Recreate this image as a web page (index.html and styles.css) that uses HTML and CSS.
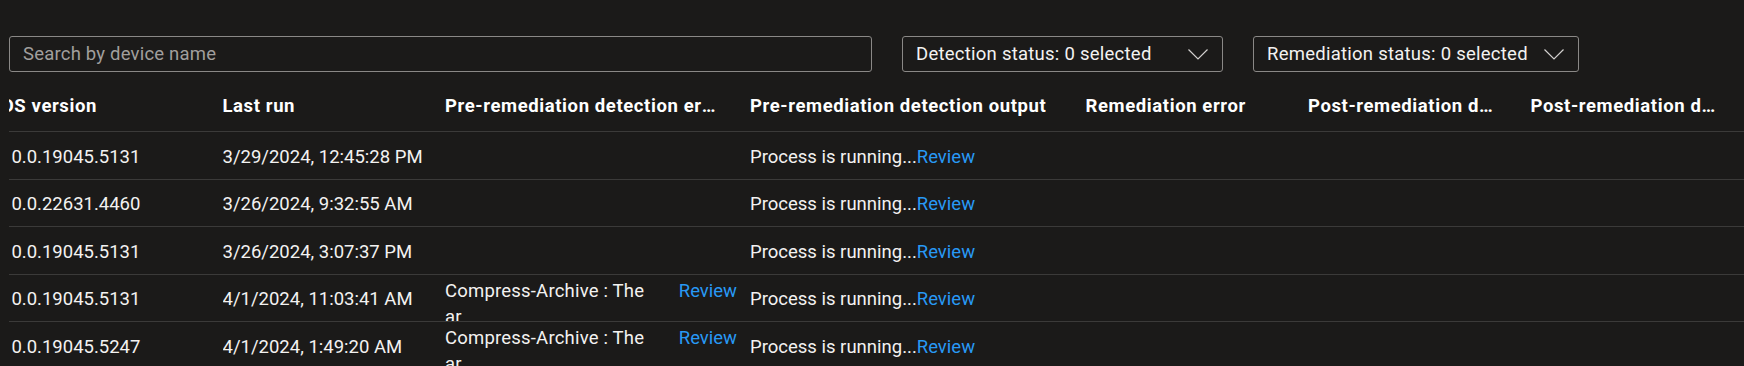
FILE: index.html
```html
<!DOCTYPE html>
<html lang="en">
<head>
<meta charset="UTF-8">
<title>Device status</title>
<link rel="stylesheet" href="styles.css">
</head>
<body>

<div class="toolbar">
    <input type="text" class="search" placeholder="Search by device name">
    <button class="dropdown detection">
        <span>Detection status: 0 selected</span>
        <svg class="chevron" width="20" height="11" viewBox="0 0 20 11"><polyline points="0.5,0.5 10,10 19.5,0.5" fill="none" stroke="#d2d0ce" stroke-width="1.2"/></svg>
    </button>
    <button class="dropdown remediation">
        <span>Remediation status: 0 selected</span>
        <svg class="chevron" width="20" height="11" viewBox="0 0 20 11"><polyline points="0.5,0.5 10,10 19.5,0.5" fill="none" stroke="#d2d0ce" stroke-width="1.2"/></svg>
    </button>
</div>

<div class="grid">
    <div class="grid-inner">
        <div class="row head">
            <div class="cell c-os"><span>OS version</span></div>
            <div class="cell c-run"><span>Last run</span></div>
            <div class="cell c-err"><span>Pre-remediation detection error</span></div>
            <div class="cell c-out"><span>Pre-remediation detection output</span></div>
            <div class="cell c-rem"><span>Remediation error</span></div>
            <div class="cell c-post"><span>Post-remediation detection error</span></div>
            <div class="cell c-post"><span>Post-remediation detection output</span></div>
        </div>

        <div class="row">
            <div class="cell c-os">10.0.19045.5131</div>
            <div class="cell c-run">3/29/2024, 12:45:28 PM</div>
            <div class="cell c-err"></div>
            <div class="cell c-out">Process is running...<a href="#">Review</a></div>
            <div class="cell c-rem"></div>
            <div class="cell c-post"></div>
            <div class="cell c-post"></div>
        </div>
        <div class="row">
            <div class="cell c-os">10.0.22631.4460</div>
            <div class="cell c-run">3/26/2024, 9:32:55 AM</div>
            <div class="cell c-err"></div>
            <div class="cell c-out">Process is running...<a href="#">Review</a></div>
            <div class="cell c-rem"></div>
            <div class="cell c-post"></div>
            <div class="cell c-post"></div>
        </div>
        <div class="row">
            <div class="cell c-os">10.0.19045.5131</div>
            <div class="cell c-run">3/26/2024, 3:07:37 PM</div>
            <div class="cell c-err"></div>
            <div class="cell c-out">Process is running...<a href="#">Review</a></div>
            <div class="cell c-rem"></div>
            <div class="cell c-post"></div>
            <div class="cell c-post"></div>
        </div>
        <div class="row">
            <div class="cell c-os">10.0.19045.5131</div>
            <div class="cell c-run">4/1/2024, 11:03:41 AM</div>
            <div class="cell c-err"><div class="err-text">Compress-Archive : The ar...</div><a href="#">Review</a></div>
            <div class="cell c-out">Process is running...<a href="#">Review</a></div>
            <div class="cell c-rem"></div>
            <div class="cell c-post"></div>
            <div class="cell c-post"></div>
        </div>
        <div class="row">
            <div class="cell c-os">10.0.19045.5247</div>
            <div class="cell c-run">4/1/2024, 1:49:20 AM</div>
            <div class="cell c-err"><div class="err-text">Compress-Archive : The ar...</div><a href="#">Review</a></div>
            <div class="cell c-out">Process is running...<a href="#">Review</a></div>
            <div class="cell c-rem"></div>
            <div class="cell c-post"></div>
            <div class="cell c-post"></div>
        </div>
    </div>
</div>

</body>
</html>
```

FILE: styles.css
```css
body { margin: 0; background: #1b1a19; color: #f3f2f1; font-family: Roboto, "Noto Sans", sans-serif; font-size: 18.5px; overflow: hidden; }

.toolbar { display: flex; gap: 30px; padding: 36px 0 0 9px; }
.search { box-sizing: border-box; width: 863px; height: 36px; background: #1b1a19; border: 1px solid #8a8886; border-radius: 3px; padding: 0 13px; color: #f3f2f1; font: inherit; letter-spacing: 0.2px; outline: none; }
.search::placeholder { color: #a19f9d; }
.dropdown { box-sizing: border-box; height: 36px; display: flex; align-items: center; justify-content: space-between; gap: 14px; background: #1b1a19; border: 1px solid #8a8886; border-radius: 3px; padding: 0 14px 0 13px; color: #f3f2f1; font: inherit; letter-spacing: 0.25px; }
.detection { width: 321px; }
.remediation { width: 326px; }
.chevron { display: block; flex: none; }

.grid { margin: 12px 0 0 9px; overflow: hidden; }
.grid-inner { margin-left: -8px; width: 1800px; }
.row { display: flex; height: 47.5px; box-sizing: border-box; border-bottom: 1px solid #3b3a39; }
.row.head { height: 48px; padding-bottom: 3px; font-weight: 700; color: #ffffff; letter-spacing: 0.6px; }
.cell { box-sizing: border-box; height: 100%; display: flex; align-items: center; white-space: nowrap; overflow: hidden; flex: none; }
.row:not(.head) .cell { padding-top: 3px; }
.head .cell { padding-right: 34px; }
.head .cell span { overflow: hidden; text-overflow: ellipsis; }
.c-os { width: 221.5px; }
.c-run { width: 222.5px; }
.c-err { width: 305px; padding-right: 13px; }
.c-out { width: 335.5px; }
.head .c-out { padding-right: 20px; }
.c-rem { width: 222.5px; }
.c-post { width: 222.5px; }

.row:not(.head) .c-err { align-items: flex-start; padding-top: 3px; }
.err-text { width: 225px; white-space: normal; line-height: 26px; letter-spacing: 0.2px; }
.c-err a { margin-left: auto; line-height: 26px; }

a { color: #2899f5; text-decoration: none; }
```
